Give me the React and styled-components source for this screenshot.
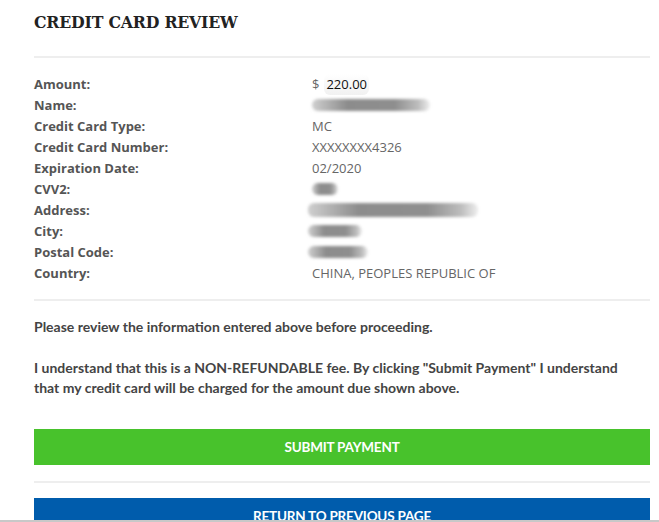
import React from 'react';
import styled, { createGlobalStyle } from 'styled-components';

const GlobalStyle = createGlobalStyle`
  html, body {
    margin: 0;
    padding: 0;
    background: #fff;
    overflow: hidden;
  }
  body {
    font-family: "Open Sans", "Liberation Sans", sans-serif;
  }
`;

const Page = styled.div`
  width: 659px;
  height: 522px;
  box-sizing: border-box;
  padding: 0 9px 0 34px;
  overflow: hidden;
  border-bottom: 2px solid #c8c8c8;
`;

const Title = styled.h1`
  margin: 0;
  padding: 11px 0 0;
  height: 58px;
  box-sizing: border-box;
  font-family: "DejaVu Serif", "Liberation Serif", serif;
  font-stretch: semi-condensed;
  font-weight: bold;
  font-size: 17.5px;
  line-height: 22px;
  letter-spacing: -0.2px;
  color: #222;
  border-bottom: 2px solid #eeeeee;
`;

const Details = styled.div`
  display: grid;
  grid-template-columns: 278px 1fr;
  grid-auto-rows: 21px;
  padding: 16px 0 15px;
  border-bottom: 2px solid #eeeeee;
`;

const Label = styled.div`
  font-weight: bold;
  font-size: 13px;
  line-height: 21px;
  color: #555;
`;

const Value = styled.div`
  font-size: 13px;
  line-height: 21px;
  color: #666;
  display: flex;
  align-items: center;
  gap: 5px;
`;

const Amount = styled.span`
  color: #111;
  background: linear-gradient(#fff, #f1f1f1);
  border-radius: 6px;
  padding: 0 2px;
`;

const Blur = styled.div`
  width: ${({ w }) => w}px;
  height: ${({ h }) => h || 12}px;
  margin-left: ${({ x }) => x || 0}px;
  margin-top: -2px;
  border-radius: 6px;
  background: linear-gradient(90deg, #cfcfcf, #8c8c8c 30%, #8e8e8e 70%, #bdbdbd 90%, #eee);
  filter: blur(1.5px);
`;

const Notice = styled.div`
  padding: 16px 20px 0 0;
  font-family: "Lato", "Open Sans", sans-serif;
  font-weight: bold;
  font-size: 14px;
  line-height: 20px;
  color: #444;
  p {
    margin: 0 0 21px;
  }
  p:last-child {
    margin-bottom: 31px;
  }
`;

const Button = styled.button`
  display: block;
  width: 100%;
  height: 36px;
  border: none;
  margin: 0;
  padding: 0;
  background: ${({ color }) => color};
  color: #fff;
  font-family: "Lato", "Open Sans", sans-serif;
  font-weight: bold;
  font-size: 13.5px;
  letter-spacing: -0.2px;
`;

const Separator = styled.div`
  height: 2px;
  background: #eeeeee;
  margin: ${({ gap }) => gap};
`;

const rows = [
  ['Amount:', <><span>$</span><Amount>220.00</Amount></>],
  ['Name:', <Blur w={118} />],
  ['Credit Card Type:', 'MC'],
  ['Credit Card Number:', 'XXXXXXXX4326'],
  ['Expiration Date:', '02/2020'],
  ['CVV2:', <Blur w={26} />],
  ['Address:', <Blur w={170} h={14} x={-4} />],
  ['City:', <Blur w={54} x={-4} />],
  ['Postal Code:', <Blur w={60} x={-4} />],
  ['Country:', 'CHINA, PEOPLES REPUBLIC OF'],
];

const App = () => {
  return (
    <Page>
      <GlobalStyle />
      <Title>CREDIT CARD REVIEW</Title>
      <Details>
        {rows.map(([label, value]) => (
          <React.Fragment key={label}>
            <Label>{label}</Label>
            <Value>{value}</Value>
          </React.Fragment>
        ))}
      </Details>
      <Notice>
        <p>Please review the information entered above before proceeding.</p>
        <p>
          I understand that this is a NON-REFUNDABLE fee. By clicking "Submit Payment" I understand
          that my credit card will be charged for the amount due shown above.
        </p>
      </Notice>
      <Button color="#48c22c">SUBMIT PAYMENT</Button>
      <Separator gap="16px 0 15px" />
      <Button color="#005cac">RETURN TO PREVIOUS PAGE</Button>
    </Page>
  );
};

export default App;
